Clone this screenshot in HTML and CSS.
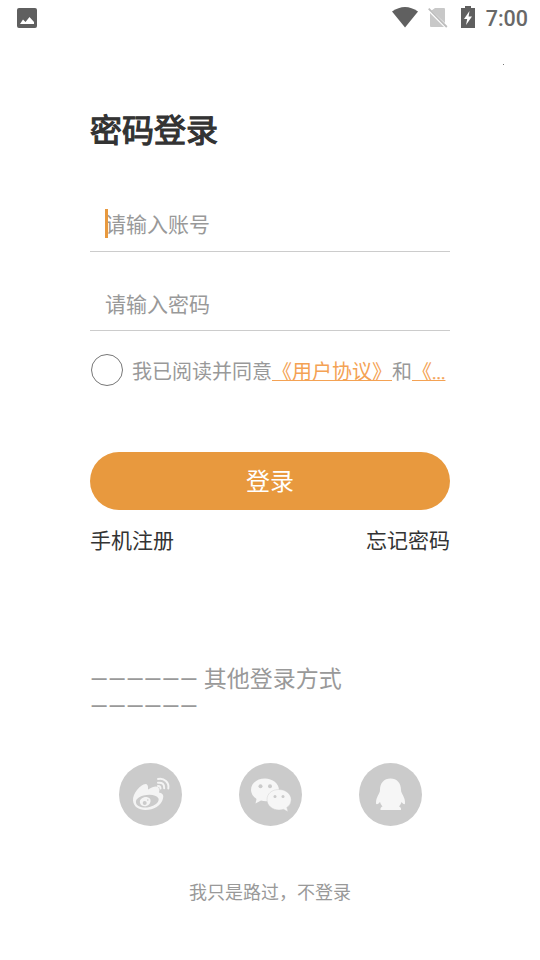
FILE: index.html
```html
<!DOCTYPE html>
<html lang="zh-CN">
<head>
<meta charset="utf-8">
<title>密码登录</title>
<link rel="stylesheet" href="styles.css">
</head>
<body>
<header class="status">
  <svg class="photo" width="20" height="20" viewBox="0 0 20 20"><path fill="#5f5f5f" fill-rule="evenodd" d="M2 0h16a2 2 0 0 1 2 2v16a2 2 0 0 1-2 2H2a2 2 0 0 1-2-2V2a2 2 0 0 1 2-2zM3 16h14v-2l-4.500-5-4 5-2.500-2.500z"/></svg>
  <div class="indicators">
    <svg width="26" height="21" viewBox="0 0 26 21"><path fill="#606060" d="M0 4.500Q13-4.500 26 4.500L13 20.500z"/></svg>
    <svg width="20" height="21" viewBox="0 0 20 21"><path fill="#c8c8c8" d="M7 1h9q1 0 1 1v14L3.500 3.500zM2 6l14 14H3q-1 0-1-1z"/><path d="M.7 1.700 18.800 20" stroke="#bdbdbd" stroke-width="1.800"/></svg>
    <svg width="14" height="22" viewBox="0 0 14 22"><path fill="#5f5f5f" d="M4 0h6v2h4v20H0V2h4z"/><path fill="#fff" d="M8.500 5 3 13h3.200L5 19l6-8.500H7.600z"/></svg>
    <span class="time">7:00</span>
  </div>
</header>
<main class="login">
  <h1>密码登录</h1>
  <div class="field focused"><i class="caret"></i>请输入账号</div>
  <div class="field">请输入密码</div>
  <div class="agreement">
    <span class="radio"></span>
    <span class="terms">我已阅读并同意<u>《用户协议》</u>和<u>《<span class="dots">...</span></u></span>
  </div>
  <button class="submit">登录</button>
  <nav class="links"><span>手机注册</span><span>忘记密码</span></nav>
  <div class="other"><div><span class="dash">——————</span><span class="label">其他登录方式</span></div><div class="dash">——————</div></div>
  <div class="social">
    <svg width="63" height="63" viewBox="0.5 0.5 63 63">
      <circle cx="32" cy="32" r="31.500" fill="#cbcbcb"/>
      <path fill="#f4f4f4" fill-rule="evenodd" d="M14.500 38C14 31 22 22 27 21.500Q30 21.500 29.500 27Q37 22.500 40 25Q41.500 27 40.500 30Q46 31 44.500 36C43 43 35 47.500 27 47.500C20 47.500 15 44 14.500 38zM17.500 40C18 44.500 25 46 31 44.500C37 43 41 39.500 40 36C38 32 31 31.500 25 33C20 34.500 17 37 17.500 40z"/>
      <path fill="#f4f4f4" fill-rule="evenodd" d="M21.500 40.500C20.500 36.500 25 34 29 34.700C32.500 35.500 33 39 30.500 42C27.500 45 22.500 44 21.500 40.500zM24.200 40.500a2 2 0 1 0 4 0a2 2 0 1 0-4 0zM28.500 37.500a.8.800 0 1 0 1.600 0a.8.800 0 1 0-1.600 0z"/>
      <g fill="none" stroke="#f4f4f4" stroke-linecap="round" stroke-width="2"><path d="M39.500 16.500C45.500 15 51 20 49.800 26"/><path d="M39.500 20.200Q46 19.500 45.700 25.800"/><path d="M39.500 23.500Q42 23.300 42 26"/></g>
    </svg>
    <svg width="63" height="63" viewBox="0.5 0.5 63 63">
      <circle cx="32" cy="32" r="31.500" fill="#cbcbcb"/>
      <path fill="#f6f6f6" d="M26.500 16C18.500 16 12.500 20.800 12.500 27.500Q12.500 32.500 18 36.500L17 41L22.500 38Q25 39 29 38.800C33 39 40.500 34 40.500 27.500C40.500 21 34 16 26.500 16z"/>
      <path fill="#f6f6f6" stroke="#cbcbcb" stroke-width=".4" d="M40.500 27C33 27 28.500 31.500 28.500 37.200C28.500 43 34 47.500 40.500 47.500Q43 47.500 45 46.800L49.500 49.300L48.300 45Q52.700 42 52.700 37.200C52.700 31.500 47 27 40.500 27z"/>
      <g fill="#cbcbcb"><circle cx="22" cy="23.700" r="2"/><circle cx="31.500" cy="23.700" r="2"/><circle cx="36.500" cy="34" r="1.500"/><circle cx="44.500" cy="34" r="1.500"/></g>
    </svg>
    <svg width="63" height="63" viewBox="0.5 0.5 63 63">
      <circle cx="32" cy="32" r="31.500" fill="#cbcbcb"/>
      <path fill="#f6f6f6" d="M32 16C25.500 16 21.500 20.500 21.500 27.500Q21.500 29 20.500 31Q17 37 17.500 41Q18.500 43 21.500 39.500Q22 42 24 44Q21.500 45 22 47.500H42.500Q43 45 40.500 44Q42.500 42 43 39.500Q46 43 46.500 41Q47 37 43.500 31Q42.500 29 42.500 27.500C42.500 20.500 38.500 16 32 16z"/>
    </svg>
  </div>
  <div class="skip">我只是路过，不登录</div>
</main>
<i class="speck"></i>
</body>
</html>
```
FILE: styles.css
```css
* { box-sizing: border-box; }
body {
  margin: 0;
  width: 540px;
  height: 960px;
  overflow: hidden;
  background: #fff;
  color: #333;
  font-family: "Noto Sans CJK SC", sans-serif;
}
svg { display: block; flex: none; }
.status {
  height: 36px;
  padding: 0 12px 0 17px;
  display: flex;
  justify-content: space-between;
  align-items: center;
}
.indicators { display: flex; align-items: center; gap: 10px; height: 34px; margin-bottom: 2px; }
.indicators svg:nth-child(3) { margin: 0 1px 0 3px; }
.time { font: 500 21.500px/34px Roboto, sans-serif; color: #686868; padding-top: 4px; }
.login { width: 360px; margin: 0 auto; }
h1 {
  height: 47px;
  margin: 69px 0 0;
  font-size: 32px;
  line-height: 46px;
  font-weight: 400;
  -webkit-text-stroke: 1.200px #333;
}
.field {
  position: relative;
  height: 79px;
  padding: 31px 0 0 15px;
  font-size: 21px;
  line-height: 40px;
  color: #999;
  border-bottom: 1px solid #ccc;
}
.focused { height: 100px; padding-top: 51px; }
.caret { position: absolute; left: 15px; top: 57px; width: 3px; height: 29px; background: #e8993e; }
.agreement { display: flex; align-items: center; height: 77px; gap: 9px; }
.radio { flex: none; width: 32px; height: 32px; margin-left: 1px; border: 1px solid #777; border-radius: 50%; }
.terms { font-size: 20px; line-height: 30px; color: #999; white-space: nowrap; padding-top: 4px; }
.terms u { color: #f4a254; text-decoration-thickness: 1px; text-underline-offset: 1px; }
.dots { font-family: Roboto, sans-serif; font-size: 17px; -webkit-text-stroke: .4px #f4a254; }
.submit {
  display: block;
  width: 360px;
  height: 58px;
  margin: 44px 0 0;
  padding: 0 0 2px;
  border: 0;
  border-radius: 29px;
  background: #e8993e;
  color: #fff;
  font: 24px/56px "Noto Sans CJK SC", sans-serif;
}
.links { display: flex; justify-content: space-between; margin-top: 14px; font-size: 21px; line-height: 30px; }
.other { margin-top: 110px; font-size: 23px; line-height: 27px; color: #999; }
.other > div { display: flex; height: 27px; }
.dash { font-family: Roboto, sans-serif; padding-top: 3px; }
.label { margin-left: 6px; }
.social { display: flex; justify-content: space-between; margin-top: 45px; padding: 0 28px 0 29px; }
.skip { margin-top: 50px; text-align: center; font-size: 18px; line-height: 30px; color: #999; }
.speck { position: absolute; left: 503px; top: 64px; width: 1px; height: 1px; background: #777; }
```
